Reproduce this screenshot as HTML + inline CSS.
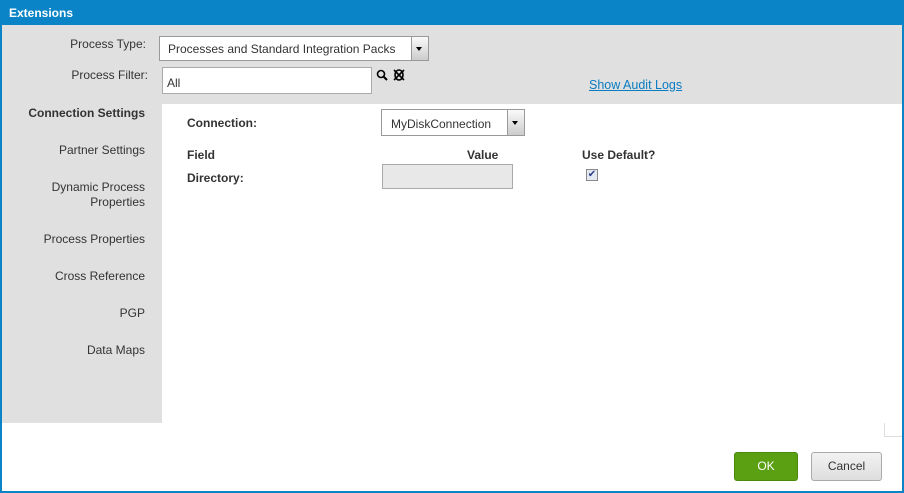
<!DOCTYPE html>
<html><head><style>
*{margin:0;padding:0;box-sizing:border-box}
body{width:904px;height:493px;position:relative;font-family:"Liberation Sans",Arial,sans-serif;font-size:12px;color:#333;background:#0a84c6;overflow:hidden}
.a{position:absolute}
.r{text-align:right}
</style></head><body>
<div class="a" style="left:9px;top:6px;color:#fff;font-weight:bold;font-size:12px">Extensions</div>
<div class="a" style="left:2px;top:25px;width:900px;height:466px;background:#fff"></div>
<div class="a" style="left:2px;top:25px;width:900px;height:79px;background:#e0e0e0"></div>
<div class="a" style="left:2px;top:104px;width:160px;height:319px;background:#e0e0e0"></div>
<div class="a r" style="left:0;width:146px;top:37px">Process Type:</div>
<div class="a" style="left:159px;top:36px;width:270px;height:25px;background:#fff;border:1px solid #999;padding:5px 8px">Processes and Standard Integration Packs</div>
<div class="a" style="left:411px;top:37px;width:17px;height:23px;background:linear-gradient(#fafafa,#ccc);border-left:1px solid #999"></div>
<div class="a" style="left:416px;top:47px;border:3.5px solid transparent;border-top:4px solid #000"></div>
<div class="a r" style="left:0;width:148px;top:68px">Process Filter:</div>
<div class="a" style="left:162px;top:67px;width:210px;height:27px;background:#fff;border:1px solid #aaa;padding:8px 4px">All</div>
<svg class="a" style="left:376px;top:69px" width="30" height="14"><circle cx="5" cy="5" r="3.5" fill="none" stroke="#000" stroke-width="1.6"/><line x1="7.5" y1="7.5" x2="11" y2="11" stroke="#000" stroke-width="2"/><ellipse cx="23" cy="6" rx="4" ry="5" fill="none" stroke="#000" stroke-width="1.6"/><line x1="18" y1="1" x2="28" y2="11" stroke="#000" stroke-width="1.6"/><line x1="28" y1="1" x2="18" y2="11" stroke="#000" stroke-width="1.6"/></svg>
<div class="a" style="left:589px;top:78px;color:#0a7cc0;text-decoration:underline;font-size:12.5px">Show Audit Logs</div>
<div class="a r" style="left:0;width:145px;top:106px;font-weight:bold">Connection Settings</div>
<div class="a r" style="left:0;width:145px;top:143px">Partner Settings</div>
<div class="a r" style="left:0;width:145px;top:180px;line-height:15px">Dynamic Process<br>Properties</div>
<div class="a r" style="left:0;width:145px;top:232px">Process Properties</div>
<div class="a r" style="left:0;width:145px;top:269px">Cross Reference</div>
<div class="a r" style="left:0;width:145px;top:306px">PGP</div>
<div class="a r" style="left:0;width:145px;top:343px">Data Maps</div>
<div class="a" style="left:187px;top:116px;font-weight:bold">Connection:</div>
<div class="a" style="left:381px;top:109px;width:144px;height:27px;background:#fff;border:1px solid #999;padding:7px 9px">MyDiskConnection</div>
<div class="a" style="left:507px;top:110px;width:17px;height:25px;background:linear-gradient(#fafafa,#ccc);border-left:1px solid #999"></div>
<div class="a" style="left:512px;top:121px;border:3.5px solid transparent;border-top:4px solid #000"></div>
<div class="a" style="left:187px;top:148px;font-weight:bold">Field</div>
<div class="a" style="left:467px;top:148px;font-weight:bold">Value</div>
<div class="a" style="left:582px;top:148px;font-weight:bold">Use Default?</div>
<div class="a" style="left:187px;top:171px;font-weight:bold">Directory:</div>
<div class="a" style="left:382px;top:164px;width:131px;height:25px;background:#e8e8e8;border:1px solid #aaa"></div>
<div class="a" style="left:586px;top:169px;width:12px;height:12px;border:1px solid #888;background:#e4e8f0;font-size:10px;line-height:10px;text-align:center;color:#2a3d8a">✔</div>
<div class="a" style="left:884px;top:423px;width:18px;height:14px;border-left:1px solid #ddd;border-bottom:1px solid #ddd"></div>
<div class="a" style="left:734px;top:452px;width:64px;height:29px;background:#5aa012;border:1px solid #4a8a0a;border-radius:3px;color:#fff;text-align:center;line-height:27px">OK</div>
<div class="a" style="left:811px;top:452px;width:71px;height:29px;background:linear-gradient(#f2f2f2,#dedede);border:1px solid #aaa;border-radius:3px;color:#333;text-align:center;line-height:27px">Cancel</div>
</body></html>
